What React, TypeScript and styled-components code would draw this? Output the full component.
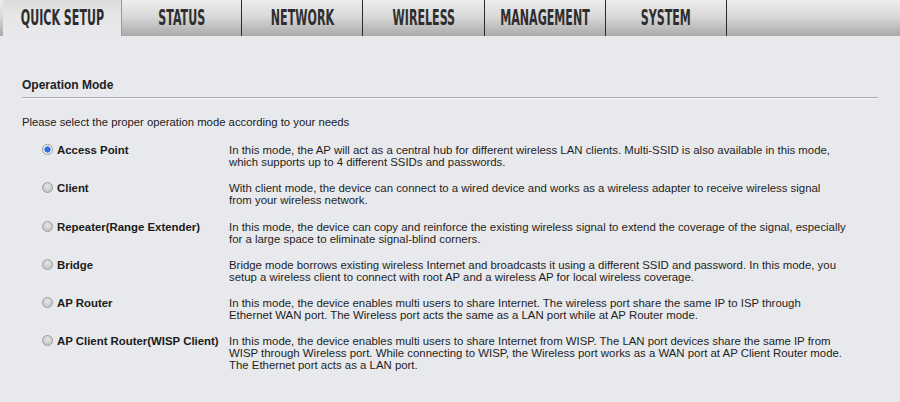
import styled, { createGlobalStyle } from "styled-components";

const GlobalStyle = createGlobalStyle`
  html, body {
    margin: 0;
    padding: 0;
    background: #e8e9ec;
  }
  body {
    font-family: "Liberation Sans", Arial, sans-serif;
    color: #1a1a1a;
  }
`;

const tabs = [
  { label: "QUICK SETUP", width: 122 },
  { label: "STATUS", width: 120 },
  { label: "NETWORK", width: 121 },
  { label: "WIRELESS", width: 122 },
  { label: "MANAGEMENT", width: 121 },
  { label: "SYSTEM", width: 121 },
];

const modes = [
  {
    name: "Access Point",
    checked: true,
    lines: [
      "In this mode, the AP will act as a central hub for different wireless LAN clients. Multi-SSID is also available in this mode,",
      "which supports up to 4 different SSIDs and passwords.",
    ],
  },
  {
    name: "Client",
    lines: [
      "With client mode, the device can connect to a wired device and works as a wireless adapter to receive wireless signal",
      "from your wireless network.",
    ],
  },
  {
    name: "Repeater(Range Extender)",
    lines: [
      "In this mode, the device can copy and reinforce the existing wireless signal to extend the coverage of the signal, especially",
      "for a large space to eliminate signal-blind corners.",
    ],
  },
  {
    name: "Bridge",
    lines: [
      "Bridge mode borrows existing wireless Internet and broadcasts it using a different SSID and password. In this mode, you",
      "setup a wireless client to connect with root AP and a wireless AP for local wireless coverage.",
    ],
  },
  {
    name: "AP Router",
    lines: [
      "In this mode, the device enables multi users to share Internet. The wireless port share the same IP to ISP through",
      "Ethernet WAN port. The Wireless port acts the same as a LAN port while at AP Router mode.",
    ],
  },
  {
    name: "AP Client Router(WISP Client)",
    lines: [
      "In this mode, the device enables multi users to share Internet from WISP. The LAN port devices share the same IP from",
      "WISP through Wireless port. While connecting to WISP, the Wireless port works as a WAN port at AP Client Router mode.",
      "The Ethernet port acts as a LAN port.",
    ],
  },
];

const TabBar = styled.nav`
  display: flex;
  height: 36px;
  background: linear-gradient(#ededed 0%, #d9d9d9 45%, #aaaaaa 100%);
`;

const Tab = styled.div<{ $active?: boolean; $w: number }>`
  width: ${(p) => p.$w}px;
  flex: none;
  display: flex;
  align-items: center;
  justify-content: center;
  box-sizing: border-box;
  border-right: 1px solid #2b2b2b;
  background: ${(p) =>
    p.$active ? "linear-gradient(#dcdcdc 0%, #e6e6e8 40%, #e8e9ec 100%)" : "transparent"};
  ${(p) => (p.$active ? "margin-left: 3px; border-right-color: #9a9a9a;" : "")}
`;

const TabText = styled.span`
  display: inline-block;
  font-family: "DejaVu Sans Condensed", "DejaVu Sans", sans-serif;
  font-weight: 700;
  font-size: 22px;
  color: #2e2e2e;
  transform: scaleX(0.56);
  white-space: nowrap;
  line-height: 1;
`;

const Content = styled.main`
  padding: 0 22px;
`;

const SectionTitle = styled.h2`
  margin: 0;
  padding-top: 42px;
  padding-bottom: 5px;
  font-size: 12px;
  font-weight: 700;
  line-height: 14px;
  color: #222;
  border-bottom: 1px solid #aeaeae;
  box-shadow: 0 1px 0 #f7f7f8;
`;

const Intro = styled.p`
  margin: 17px 0 0;
  font-size: 11.3px;
  line-height: 14px;
`;

const ModeList = styled.div`
  display: flex;
  flex-direction: column;
  gap: 13.3px;
  margin-top: 14px;
  padding-left: 20px;
`;

const ModeRow = styled.label`
  display: flex;
  align-items: flex-start;
`;

const Radio = styled.span<{ $checked?: boolean }>`
  flex: none;
  width: 11px;
  height: 11px;
  margin-top: 1px;
  border-radius: 50%;
  box-sizing: border-box;
  border: 1px solid #9c9c9c;
  background: ${(p) =>
    p.$checked
      ? "radial-gradient(circle, #2d6fe0 0 2.5px, #6c9ae8 3px, #f4f4f4 3.5px, #dedede 100%)"
      : "radial-gradient(circle at 50% 35%, #e6e6e6 0%, #cdcdcd 60%, #bdbdbd 100%)"};
`;

const ModeName = styled.span`
  width: 176px;
  flex: none;
  padding-left: 4px;
  box-sizing: border-box;
  font-size: 11.4px;
  font-weight: 700;
  line-height: 14px;
  white-space: nowrap;
`;

const ModeDesc = styled.div`
  font-size: 11.4px;
  line-height: 12px;
  padding-top: 1px;
  color: #1e1e1e;
  white-space: nowrap;
`;

export default function App() {
  return (
    <>
      <GlobalStyle />
      <TabBar>
        {tabs.map((t, i) => (
          <Tab key={t.label} $active={i === 0} $w={i === 0 ? t.width - 3 : t.width}>
            <TabText>{t.label}</TabText>
          </Tab>
        ))}
      </TabBar>
      <Content>
        <SectionTitle>Operation Mode</SectionTitle>
        <Intro>Please select the proper operation mode according to your needs</Intro>
        <ModeList>
          {modes.map((m) => (
            <ModeRow key={m.name}>
              <Radio $checked={m.checked} />
              <ModeName>{m.name}</ModeName>
              <ModeDesc>
                {m.lines.map((l, i) => (
                  <div key={i}>{l}</div>
                ))}
              </ModeDesc>
            </ModeRow>
          ))}
        </ModeList>
      </Content>
    </>
  );
}
